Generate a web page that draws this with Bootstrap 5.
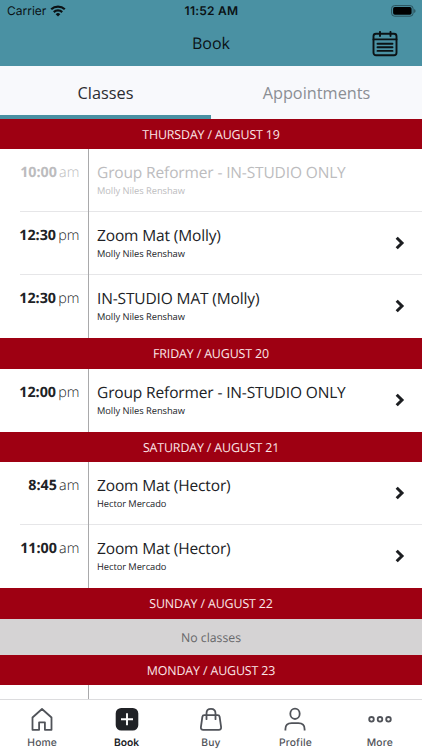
<!DOCTYPE html>
<html lang="en">
<head>
<meta charset="utf-8">
<meta name="viewport" content="width=device-width, initial-scale=1">
<title>Book</title>
<link href="https://cdn.jsdelivr.net/npm/bootstrap@5.3.0/dist/css/bootstrap.min.css" rel="stylesheet">
<style>
html,body{height:100%}
body{font-family:"Open Sans","Noto Sans",sans-serif;color:#202226;overflow:hidden;text-rendering:geometricPrecision}
.screen{width:422px;height:750px}
.topbar{background:#4a91a3;height:65.6px;color:#0b1215}
.status{height:22px;font:400 12px/22px Inter,sans-serif;padding:0 6px 0 7px}
.status .clock{font-weight:600;letter-spacing:.25px}
.titlebar{height:43.6px;font-size:16px;line-height:43px;padding-right:24px}
.side{flex:1 1 0}
.tabs{height:53.1px;background:#f8f9fc}
.tab{border:0;border-bottom:4px solid transparent;background:none;font-size:16.3px;padding:6px 0 0;color:#8b8e94}
.tab.on{color:#2b2d31;border-color:#4a91a3}
.day{height:30.4px;flex:none;background:#9e0012;color:#fbe6e8;font-size:12.4px;letter-spacing:-.13px;line-height:31.6px}
.slot{height:63.1px;flex:none;background:#fff}
.slot-time{width:88.5px;padding:14px 8.200px 0 0;border-right:1px solid #a9a9ab;font-size:14.3px;line-height:20px;white-space:nowrap}
.slot-time b{font-weight:700}
.slot-time span{font-weight:300;margin-left:2.200px}
.slot-info{padding:12px 0 0 8.500px}
.slot-name{font-size:15.5px;letter-spacing:-.14px;line-height:22px}
.slot-staff{font-size:9.3px;letter-spacing:-.04px;line-height:15px}
.past{color:#bcbcbe}
.ruled{background:linear-gradient(#e6e6e8,#e6e6e8) right bottom/402px 1px no-repeat #fff}
.arrow{margin:0 17px 1px 0}
.none{height:36.2px;flex:none;background:#d5d3d4;color:#68686a;font-size:12.3px;line-height:37px}
.dock{height:51px;border-top:1px solid #dcdcde;background:#fff;font:500 10.3px/12px Inter,sans-serif;color:#505359;letter-spacing:.15px}
.dock a{color:inherit;padding-top:7px;flex:1 1 0}
.dock a.on{color:#202226;font-weight:600;letter-spacing:0}
.dock svg{margin-bottom:6px}
</style>
<script src="https://cdn.jsdelivr.net/npm/bootstrap@5.3.0/dist/js/bootstrap.bundle.min.js"></script>
</head>
<body>
<svg class="d-none"><symbol id="chev" viewBox="0 0 10 14"><path d="M1.700 1.700 7 7l-5.300 5.300" fill="none" stroke="#1c1e21" stroke-width="3"/></symbol></svg>
<div class="screen d-flex flex-column overflow-hidden">
<header class="topbar flex-shrink-0">
<div class="status d-flex align-items-center">
<div class="side d-flex align-items-center"><span>Carrier</span>
<svg class="ms-1" width="16" height="12" viewBox="0 0 16 12" fill="none" stroke="#0b1215" stroke-width="2.200"><path d="M1.200 4.300a9.800 9.800 0 0 1 13.600 0M3.800 7.100a6 6 0 0 1 8.400 0"/><path d="M8 11.500 5.700 9.200a3.300 3.300 0 0 1 4.600 0z" fill="#0b1215" stroke="none"/></svg></div>
<span class="clock">11:52 AM</span>
<div class="side d-flex justify-content-end"><svg width="25" height="12" viewBox="0 0 25 12"><rect x=".6" y=".6" width="21.500" height="10.600" rx="3" fill="none" stroke="#2a515c"/><rect x="2.100" y="2.100" width="18.500" height="7.600" rx="1.700" fill="#000"/><path d="M23.200 4v4q1.300-.6 1.300-2t-1.300-2" fill="#2a515c"/></svg></div>
</div>
<div class="titlebar d-flex align-items-center">
<div class="side"></div><span class="ps-4">Book</span>
<div class="side d-flex justify-content-end"><svg width="26" height="26" viewBox="0 0 26 26" fill="none" stroke="#0b1215" stroke-width="1.900" stroke-linecap="round"><rect x="1.500" y="2.700" width="23" height="21.500" rx="2.500"/><path d="M1.500 8.400h23M8 .9v4.100M18.500 .9v4.100M5.500 12.800h15M5.500 16.300h15M5.500 19.900h15"/></svg></div>
</div>
</header>
<nav class="tabs d-flex flex-shrink-0"><button class="tab on w-50">Classes</button><button class="tab w-50">Appointments</button></nav>
<main class="flex-grow-1 overflow-hidden d-flex flex-column">
<div class="day text-center">THURSDAY / AUGUST 19</div>
<div class="slot d-flex ruled past"><div class="slot-time text-end"><b>10:00</b><span>am</span></div><div class="slot-info flex-grow-1"><div class="slot-name">Group Reformer - IN-STUDIO ONLY</div><div class="slot-staff">Molly Niles Renshaw</div></div></div>
<div class="slot d-flex ruled"><div class="slot-time text-end"><b>12:30</b><span>pm</span></div><div class="slot-info flex-grow-1"><div class="slot-name">Zoom Mat (Molly)</div><div class="slot-staff">Molly Niles Renshaw</div></div><svg class="arrow align-self-center" width="10" height="14"><use href="#chev"/></svg></div>
<div class="slot d-flex"><div class="slot-time text-end"><b>12:30</b><span>pm</span></div><div class="slot-info flex-grow-1"><div class="slot-name">IN-STUDIO MAT (Molly)</div><div class="slot-staff">Molly Niles Renshaw</div></div><svg class="arrow align-self-center" width="10" height="14"><use href="#chev"/></svg></div>
<div class="day text-center">FRIDAY / AUGUST 20</div>
<div class="slot d-flex"><div class="slot-time text-end"><b>12:00</b><span>pm</span></div><div class="slot-info flex-grow-1"><div class="slot-name">Group Reformer - IN-STUDIO ONLY</div><div class="slot-staff">Molly Niles Renshaw</div></div><svg class="arrow align-self-center" width="10" height="14"><use href="#chev"/></svg></div>
<div class="day text-center">SATURDAY / AUGUST 21</div>
<div class="slot d-flex ruled"><div class="slot-time text-end"><b>8:45</b><span>am</span></div><div class="slot-info flex-grow-1"><div class="slot-name">Zoom Mat (Hector)</div><div class="slot-staff">Hector Mercado</div></div><svg class="arrow align-self-center" width="10" height="14"><use href="#chev"/></svg></div>
<div class="slot d-flex"><div class="slot-time text-end"><b>11:00</b><span>am</span></div><div class="slot-info flex-grow-1"><div class="slot-name">Zoom Mat (Hector)</div><div class="slot-staff">Hector Mercado</div></div><svg class="arrow align-self-center" width="10" height="14"><use href="#chev"/></svg></div>
<div class="day text-center">SUNDAY / AUGUST 22</div>
<div class="none text-center">No classes</div>
<div class="day text-center">MONDAY / AUGUST 23</div>
<div class="slot d-flex"><div class="slot-time"></div></div>
</main>
<nav class="dock d-flex flex-shrink-0 text-center">
<a class="text-decoration-none d-flex flex-column align-items-center"><svg width="24" height="24" viewBox="0 0 24 24" fill="none" stroke="currentColor" stroke-width="1.800" stroke-linejoin="round"><path d="M2.500 10.500 12 2l9.500 8.500v12.300h-6.600v-7.500H9.100v7.500H2.500z"/></svg>Home</a>
<a class="on text-decoration-none d-flex flex-column align-items-center"><svg width="24" height="24" viewBox="0 0 24 24"><rect x=".7" y="1" width="22.600" height="22.600" rx="5.500" fill="#202226"/><path d="M12 6.300v12M6 12.300h12" stroke="#fff" stroke-width="1.900"/></svg>Book</a>
<a class="text-decoration-none d-flex flex-column align-items-center"><svg width="24" height="24" viewBox="0 0 24 24" fill="none" stroke="currentColor" stroke-width="1.800" stroke-linejoin="round" stroke-linecap="round"><path d="M5.200 8.200h13.600q1.500 0 1.800 1.500l1.500 10.500q.3 2.600-2.300 2.600H4.200q-2.600 0-2.300-2.600L3.400 9.700q.3-1.500 1.800-1.500zM7.500 12.200V6.400q0-4.600 4.500-4.600t4.500 4.600v5.800"/></svg>Buy</a>
<a class="text-decoration-none d-flex flex-column align-items-center"><svg width="24" height="24" viewBox="0 0 24 24" fill="none" stroke="currentColor" stroke-width="1.800"><ellipse cx="12" cy="6.800" rx="4.700" ry="5.200"/><path d="M2.400 23.500v-1.300q0-6 6.200-6h6.800q6.200 0 6.200 6V23.500"/></svg>Profile</a>
<a class="text-decoration-none d-flex flex-column align-items-center"><svg width="24" height="24" viewBox="0 0 24 24" fill="none" stroke="currentColor" stroke-width="1.800"><circle cx="3.500" cy="12.300" r="2.300"/><circle cx="12" cy="12.300" r="2.300"/><circle cx="20.500" cy="12.300" r="2.300"/></svg>More</a>
</nav>
</div>
</body>
</html>
